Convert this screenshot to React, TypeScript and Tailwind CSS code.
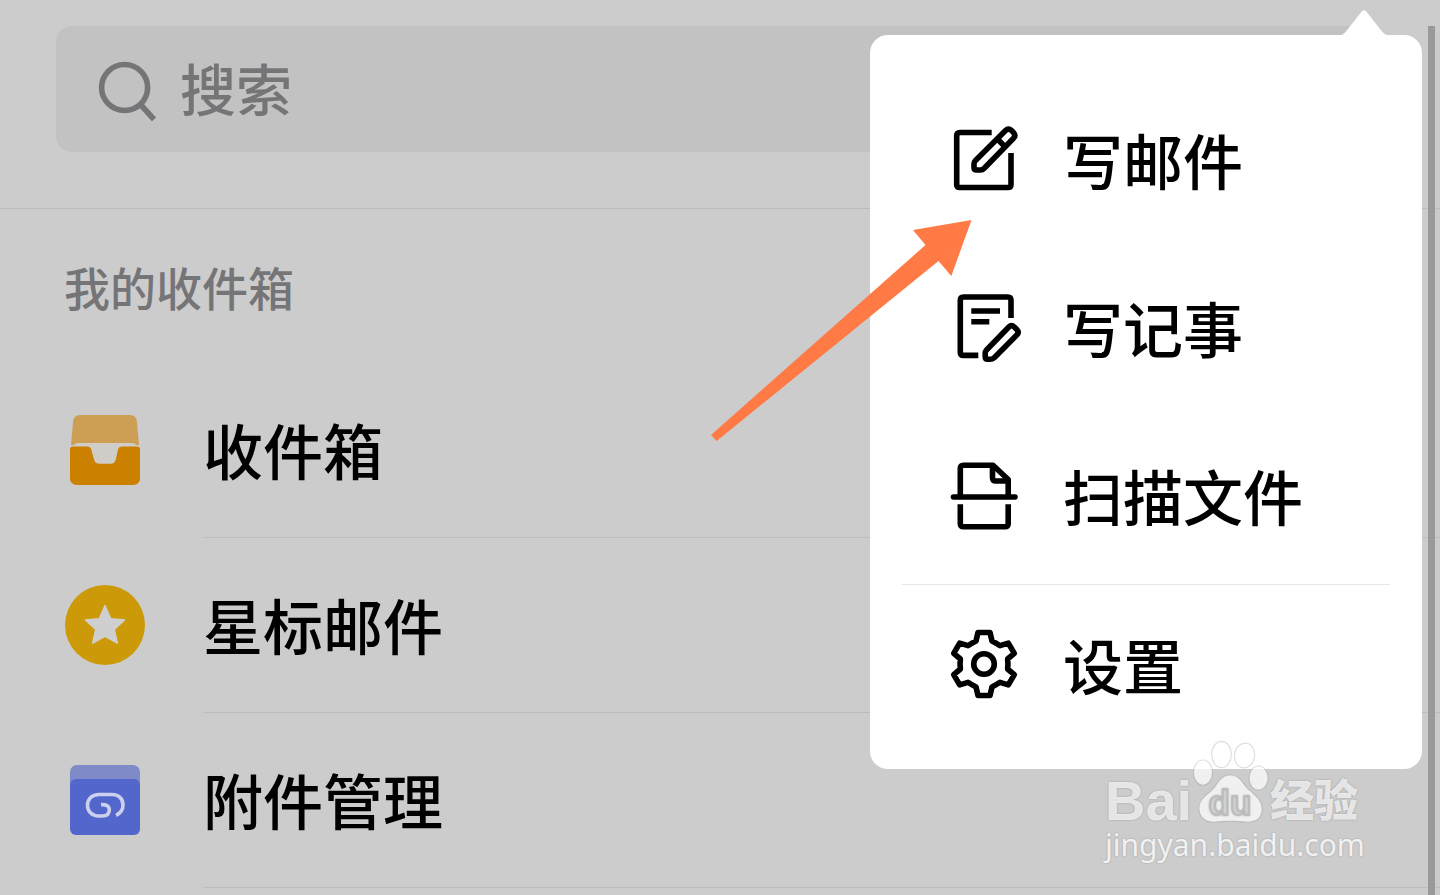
import type { ReactNode } from 'react';

function LineIcon({ children }: { children: ReactNode }) {
  return (
    <svg
      className="size-[72px] shrink-0 overflow-visible"
      viewBox="0 0 72 72"
      fill="none"
      stroke="currentColor"
      strokeWidth="5.6"
      strokeLinejoin="round"
      aria-hidden="true"
    >
      {children}
    </svg>
  );
}

const ComposeIcon = () => (
  <LineIcon>
    <path d="M43.7 8.5H12Q8.7 8.5 8.7 11.8V60.4Q8.7 63.5 12 63.5H59.8Q63 63.5 63 60.4V29" />
    <path d="M57.3 6.7Q60.5 3.7 63.5 6.5L65.3 8.3Q68.3 11.5 65.3 14.5L36 44.5Q34.5 46 32.5 46H28.5Q26 46 26 43.5V40Q26 38 27.5 36.5Z" />
    <path d="M49.7 15.3L57 22.7" />
  </LineIcon>
);

const NoteIcon = () => (
  <LineIcon>
    <path d="M63 26V8.2Q63 5 59.8 5H15.5Q12.3 5 12.3 8.2V60.2Q12.3 63.4 15.5 63.4H30.3" />
    <path d="M23.3 19H52M23.3 29.7H41.3" />
    <path d="M60.8 35Q63.5 32.3 66.3 35L68.8 37.5Q71.5 40.3 68.8 43L46.5 65.5Q45 67.2 42.5 67.2H39.5Q37.2 67.2 37.2 64.8V61Q37.2 59.5 38.5 58Z" />
  </LineIcon>
);

const ScanIcon = () => (
  <LineIcon>
    <path d="M12.3 37V8.5Q12.3 5.2 15.6 5.2H45L60.2 19.5V37" />
    <path d="M44.5 5.5V17.8Q44.5 21 47.7 21H60" />
    <path d="M5.5 37H67" strokeLinecap="round" />
    <path d="M12.3 44.3V63.5Q12.3 66.7 15.6 66.7H57Q60.2 66.7 60.2 63.5V44.3" />
  </LineIcon>
);

const GearIcon = () => (
  <LineIcon>
    <g transform="translate(36 36)">
      <path d="M-6 -31.5H6L8 -23Q12 -21 16 -18.3L24.3 -20.9L30.3 -10.6L23.6 -5Q24.3 0 23.6 5L30.3 10.6L24.3 20.9L16 18.3Q12 21 8 23L6 31.5H-6L-8 23Q-12 21 -16 18.3L-24.3 20.9L-30.3 10.6L-23.6 5Q-24.3 0 -23.6 -5L-30.3 -10.6L-24.3 -20.9L-16 -18.3Q-12 -21 -8 -23Z" />
      <circle r="10.3" />
    </g>
  </LineIcon>
);

const InboxIcon = () => (
  <svg className="size-[70px]" viewBox="0 0 70 70" aria-hidden="true">
    <path d="M10 0H60Q66.4 0 66.9 6.5L69 30H1L3.1 6.5Q3.6 0 10 0Z" fill="#cc9f55" />
    <path d="M0 35Q0 31.5 3.5 31.5Q4 28 8 28H62Q66 28 66.5 31.5Q70 31.5 70 35L60 50H10Z" fill="#d0cdc8" />
    <path
      d="M0 34.5Q0 31.5 3 31.5H17Q20.5 31.5 21.3 34.5L24 44.5Q25.2 48.7 29.5 48.7H40.5Q44.8 48.7 45.8 44.5L48 34.5Q48.8 31.5 52 31.5H67Q70 31.5 70 34.5V63Q70 70 63 70H7Q0 70 0 63Z"
      fill="#cc8000"
    />
  </svg>
);

const StarIcon = () => (
  <svg className="size-20" viewBox="0 0 80 80" aria-hidden="true">
    <circle cx="40" cy="40" r="40" fill="#cc9a08" />
    <path
      d="M40 20.5L45.8 33.8L59.5 35L49.3 44.5L52.4 58.2L40 51.4L27.6 58.2L30.7 44.5L20.5 35L34.2 33.8Z"
      fill="#cfcfcf"
      stroke="#cfcfcf"
      strokeWidth="1.4"
      strokeLinejoin="round"
    />
  </svg>
);

const AttachmentIcon = () => (
  <svg className="size-[70px]" viewBox="0 0 70 70" aria-hidden="true">
    <rect width="70" height="40" rx="7" fill="#7f8bc9" />
    <rect y="14" width="70" height="56" rx="6" fill="#5266cc" />
    <path
      d="M31 39.7Q39.3 39.2 39.3 45Q39.3 51 32 51H29C21.5 51 17.5 46 17.5 40.3C17.5 34 22 29.5 29 29.5H42C49 29.5 53 34 53 40C53 44.5 51 48 46 50.3"
      fill="none"
      stroke="#cbd1ee"
      strokeWidth="3.6"
    />
  </svg>
);

const mailboxes = [
  { label: '收件箱', icon: <InboxIcon /> },
  { label: '星标邮件', icon: <StarIcon /> },
  { label: '附件管理', icon: <AttachmentIcon /> },
];

const actions = [
  { label: '写邮件', icon: <ComposeIcon /> },
  { label: '写记事', icon: <NoteIcon /> },
  { label: '扫描文件', icon: <ScanIcon /> },
];

function Watermark() {
  return (
    <div className="pointer-events-none absolute top-[740px] right-[75px] flex w-[260px] flex-col text-white/75 [text-shadow:0_0_2px_rgba(0,0,0,0.25)]">
      <div className="flex h-[84px] items-end">
        <span className="w-[87px] font-['Liberation_Sans',sans-serif] text-[56px] leading-[46px] font-bold">Bai</span>
        <svg className="h-[84px] w-[78px] shrink-0" viewBox="0 0 78 84" aria-hidden="true">
          <g fill="#fff" fillOpacity="0.7" stroke="#000" strokeOpacity="0.13" strokeWidth="1.2">
            <ellipse cx="11" cy="32.5" rx="9.5" ry="12.5" />
            <ellipse cx="29.5" cy="14.5" rx="9.8" ry="13.2" />
            <ellipse cx="52.5" cy="15.5" rx="10" ry="12.5" transform="rotate(8 52.5 15.5)" />
            <ellipse cx="66.5" cy="38" rx="9.5" ry="12" />
            <path d="M38 35C48 35 50 43 56 49C63 55 70 60 70 69C70 78 64 82 56 82C50 82 46 81 38 81C31 81 27 82 21 82C12 82 7 76 7 68C7 59 15 55 20 50C26 44 28 35 38 35Z" />
          </g>
          <text
            x="38"
            y="75"
            textAnchor="middle"
            fontFamily="Liberation Sans, sans-serif"
            fontWeight="700"
            fontSize="35"
            fill="#d8d8d8"
            stroke="#bdbdbd"
            strokeWidth="1.5"
          >
            du
          </text>
        </svg>
        <span className="shrink-0 text-[44px] leading-[52px] font-black">经验</span>
      </div>
      <span className="font-['Noto_Sans',sans-serif] text-[30px] leading-[42px] font-normal text-white/85">
        jingyan.baidu.com
      </span>
    </div>
  );
}

export default function App() {
  return (
    <div className="relative min-h-screen overflow-hidden bg-[#cccccc] font-['Noto_Sans_CJK_SC',sans-serif] font-medium text-black">
      <header className="border-b border-[#bcbcbc] px-14 pt-[26px] pb-14">
        <label className="flex h-[126px] items-center gap-[22px] rounded-2xl bg-[#c2c2c2] pl-[38px] text-[#757578]">
          <svg
            className="size-16 shrink-0"
            viewBox="0 0 64 64"
            fill="none"
            stroke="currentColor"
            strokeWidth="5.6"
            aria-hidden="true"
          >
            <circle cx="30.6" cy="30.5" r="23" />
            <path d="M46 47L60 62.5" />
          </svg>
          <input
            type="search"
            aria-label="搜索"
            placeholder="搜索"
            className="h-20 w-full bg-transparent pb-1 text-[56px] font-medium outline-none placeholder:text-[#757578] placeholder:opacity-100"
          />
        </label>
      </header>

      <main>
        <h2 className="flex h-[154px] items-center px-16 text-[46px] leading-[60px] font-medium text-[#757578]">
          我的收件箱
        </h2>
        <ul>
          {mailboxes.map(({ label, icon }) => (
            <li key={label} className="flex">
              <a href="#" className="flex w-full items-center pl-[62px]">
                <span className="flex w-[86px] shrink-0 justify-center pb-0.5">{icon}</span>
                <span className="ml-[55px] flex h-[175px] grow items-center border-b border-[#bcbcbc] pb-0.5 text-[60px] leading-[80px]">
                  {label}
                </span>
              </a>
            </li>
          ))}
        </ul>
      </main>

      <div className="absolute top-[26px] right-[5px] bottom-0 w-[7px] bg-[#999999]" />

      <nav className="absolute top-[35px] right-[18px] w-[552px] rounded-[18px] bg-white pt-[41px] pb-[26px]">
        <svg className="absolute -top-[26px] right-[33px] h-[27px] w-[50px]" viewBox="0 0 50 27" aria-hidden="true">
          <path d="M0 27Q4.5 26 7 22.5L22.3 3Q25 -0.5 27.7 3L43 22.5Q45.5 26 50 27Z" fill="#fff" />
        </svg>
        {actions.map(({ label, icon }) => (
          <button key={label} type="button" className="flex h-[168px] w-full items-center gap-[43px] pl-[78px]">
            {icon}
            <span className="pb-0.5 text-[60px] leading-[80px]">{label}</span>
          </button>
        ))}
        <hr className="mx-8 mt-1 border-[#e6e6e6]" />
        <button type="button" className="flex h-[158px] w-full items-center gap-[43px] pl-[78px]">
          <GearIcon />
          <span className="text-[60px] leading-[80px]">设置</span>
        </button>
      </nav>

      <svg
        className="pointer-events-none absolute top-[220px] right-[468px] h-[222px] w-[261px]"
        viewBox="0 0 261 222"
        aria-hidden="true"
      >
        <path d="M0 215L214.5 25L202 10L260.5 0L240.3 56L227.5 41L5.7 221Z" fill="#ff7a45" />
      </svg>

      <Watermark />
    </div>
  );
}
